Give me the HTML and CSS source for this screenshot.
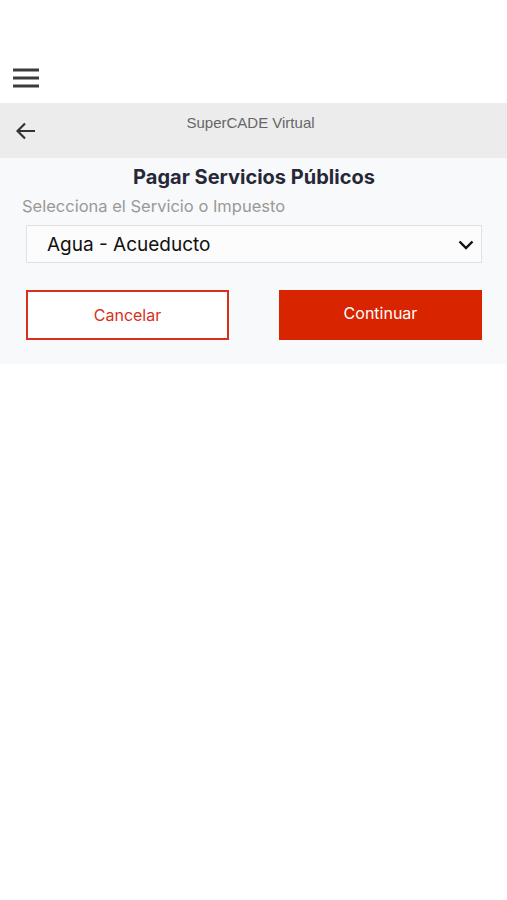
FILE: index.html
```html
<!DOCTYPE html>
<html lang="es">

<head>
    <meta charset="UTF-8">
    <meta name="viewport" content="width=device-width, initial-scale=1.0">
    <title>SuperCADE Virtual</title>
    <link rel="stylesheet" href="styles.css">
</head>

<body>
    <header class="topbar">
        <button class="menu-btn" aria-label="Menú">
            <svg width="26" height="20" viewBox="0 0 26 20">
                <path d="M0 2h26M0 10h26M0 18h26" stroke="#3c3c3c" stroke-width="3" />
            </svg>
        </button>
    </header>

    <nav class="navbar">
        <button class="back-btn" aria-label="Volver">
            <svg width="20" height="18" viewBox="0 0 20 18">
                <path d="M19 9H2M9 1.5L1.5 9L9 16.5" fill="none" stroke="#333" stroke-width="2.2" />
            </svg>
        </button>
        <span class="nav-title">SuperCADE Virtual</span>
    </nav>

    <main class="panel">
        <h1>Pagar Servicios Públicos</h1>
        <label for="servicio" class="field-label">Selecciona el Servicio o Impuesto</label>

        <div class="select-box">
            <select id="servicio">
                <option value="agua">Agua - Acueducto</option>
                <option value="luz">Energía</option>
                <option value="gas">Gas Natural</option>
            </select>
            <svg class="chevron" width="16" height="10" viewBox="0 0 16 10">
                <path d="M1.5 1.5L8 8L14.5 1.5" fill="none" stroke="#111" stroke-width="2.4" />
            </svg>
        </div>

        <div class="actions">
            <button class="btn btn-outline">Cancelar</button>
            <button class="btn btn-solid">Continuar</button>
        </div>
    </main>
</body>

</html>
```

FILE: styles.css
```css
/* styles.css */
body {
    margin: 0;
    background: #fff;
    font-family: Inter, "Liberation Sans", sans-serif;
}

button {
    font-family: inherit;
    cursor: pointer;
}

.topbar {
    height: 103px;
    display: flex;
    align-items: flex-end;
    padding: 0 0 15px 13px;
    box-sizing: border-box;
}

.menu-btn,
.back-btn {
    background: none;
    border: none;
    padding: 0;
    display: flex;
}

.navbar {
    height: 55px;
    background: #ececed;
    display: grid;
    grid-template-columns: 48px 1fr 54px;
    align-items: start;
}

.back-btn {
    margin: 19px 0 0 16px;
}

.nav-title {
    text-align: center;
    font-family: "Liberation Sans", sans-serif;
    font-size: 15px;
    color: #666;
    margin-top: 11px;
}

.panel {
    background: #f8f9fa;
    padding: 6px 25px 24px 26px;
    display: flex;
    flex-direction: column;
}

h1 {
    margin: 0;
    text-align: center;
    font-size: 20px;
    font-weight: 700;
    color: #262838;
    line-height: 26px;
}

.field-label {
    margin: 6px 0 0 -4px;
    font-size: 16.5px;
    color: #999;
    line-height: 20px;
}

.select-box {
    margin-top: 9px;
    height: 38px;
    position: relative;
    background: #fcfcfc;
    border: 1px solid #e2e2e2;
    box-sizing: border-box;
}

.select-box select {
    appearance: none;
    width: 100%;
    height: 100%;
    border: none;
    background: transparent;
    font-family: inherit;
    font-size: 19px;
    color: #111;
    padding: 0 0 0 20px;
}

.chevron {
    position: absolute;
    right: 7px;
    top: 14px;
    pointer-events: none;
}

.actions {
    margin-top: 27px;
    display: flex;
    justify-content: space-between;
}

.btn {
    width: 203px;
    height: 50px;
    font-size: 16px;
    border-radius: 0;
}

.btn-outline {
    background: #fff;
    border: 2px solid #d8301c;
    color: #d8301c;
    padding-top: 0;
}

.btn-solid {
    background: #d92400;
    border: none;
    color: #fff;
    padding-bottom: 6px;
}
```
